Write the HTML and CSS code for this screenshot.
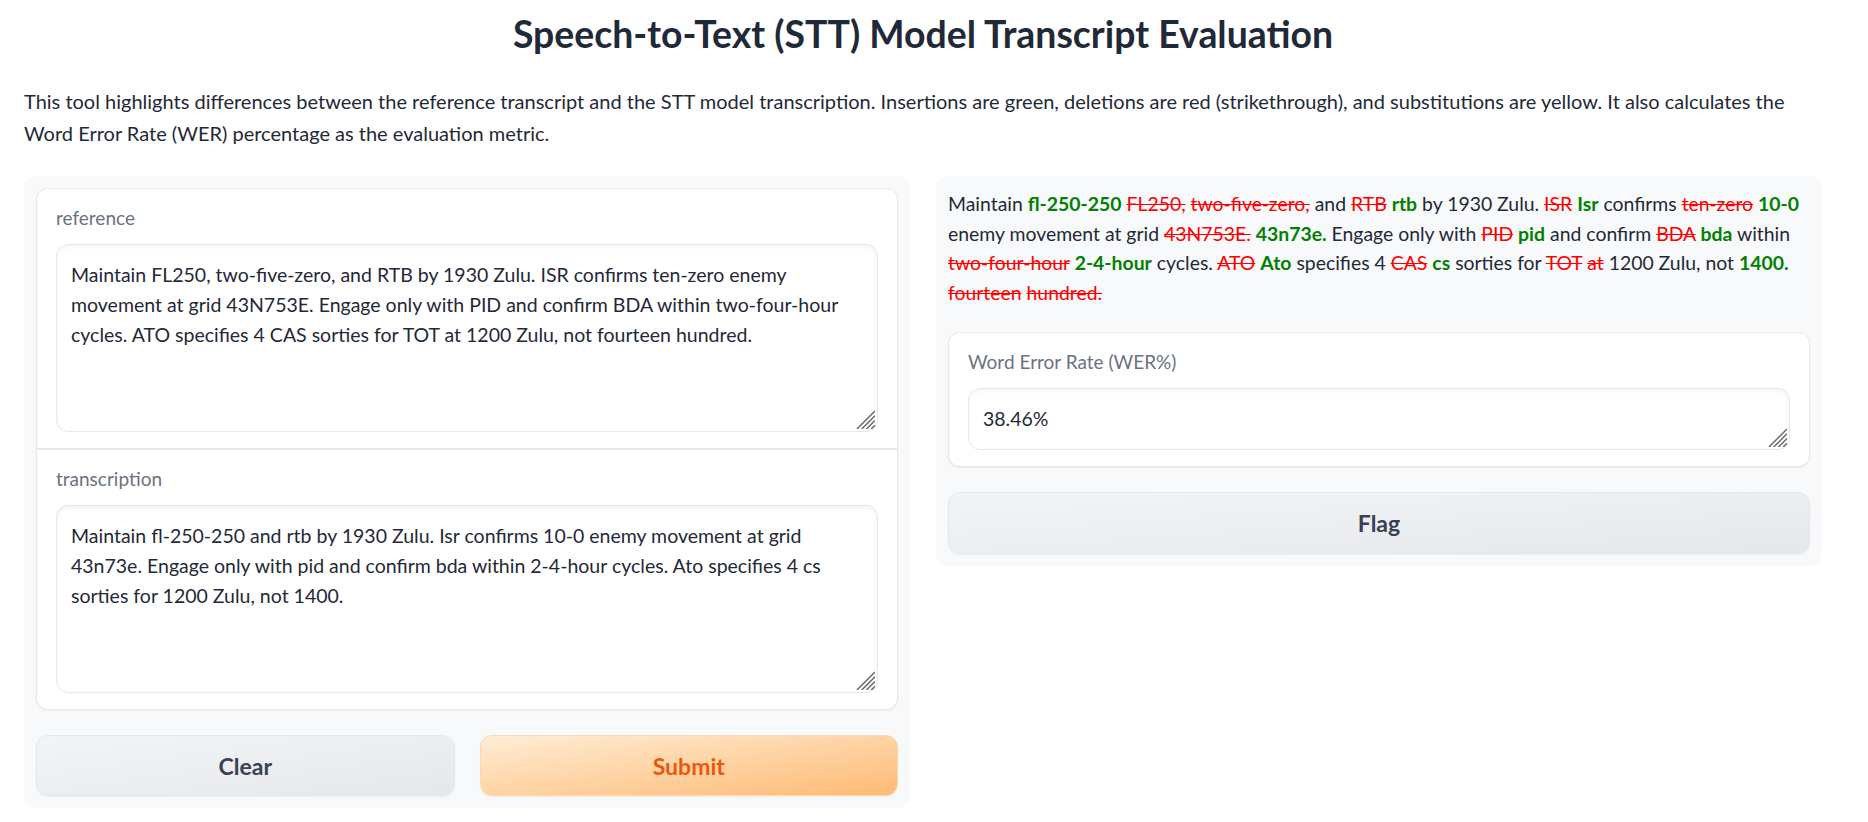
FILE: index.html
```html
<!DOCTYPE html>
<html lang="en">
<head>
<meta charset="utf-8">
<title>Speech-to-Text (STT) Model Transcript Evaluation</title>
<link rel="stylesheet" href="styles.css">
</head>
<body>
<div class="app">
  <h1 class="title">Speech-to-Text (STT) Model Transcript Evaluation</h1>
  <p class="desc">This tool highlights differences between the reference transcript and the STT model transcription. Insertions are green, deletions are red (strikethrough), and substitutions are yellow. It also calculates the Word Error Rate (WER) percentage as the evaluation metric.</p>
  <div class="row">
    <div class="panel">
      <div class="form">
        <label class="block">
          <span class="label">reference</span>
          <span class="field">
            <textarea class="input tall">Maintain FL250, two-five-zero, and RTB by 1930 Zulu. ISR confirms ten-zero enemy movement at grid 43N753E. Engage only with PID and confirm BDA within two-four-hour cycles. ATO specifies 4 CAS sorties for TOT at 1200 Zulu, not fourteen hundred.</textarea>
            <svg class="grip" viewBox="0 0 20 20" width="20" height="20" aria-hidden="true"><path d="M1 20 L20 1 M6 20 L20 6 M11 20 L20 11 M16 20 L20 16"/></svg>
          </span>
        </label>
        <label class="block">
          <span class="label">transcription</span>
          <span class="field">
            <textarea class="input tall">Maintain fl-250-250 and rtb by 1930 Zulu. Isr confirms 10-0 enemy movement at grid 43n73e. Engage only with pid and confirm bda within 2-4-hour cycles. Ato specifies 4 cs sorties for 1200 Zulu, not 1400.</textarea>
            <svg class="grip" viewBox="0 0 20 20" width="20" height="20" aria-hidden="true"><path d="M1 20 L20 1 M6 20 L20 6 M11 20 L20 11 M16 20 L20 16"/></svg>
          </span>
        </label>
      </div>
      <div class="btn-row">
        <button class="btn secondary">Clear</button>
        <button class="btn primary">Submit</button>
      </div>
    </div>
    <div class="panel">
      <div class="diff">Maintain <span class="ins">fl-250-250</span> <span class="del">FL250,</span> <span class="del">two-five-zero,</span> and <span class="del">RTB</span> <span class="ins">rtb</span> by 1930 Zulu. <span class="del">ISR</span> <span class="ins">Isr</span> confirms <span class="del">ten-zero</span> <span class="ins">10-0</span> enemy movement at grid <span class="del">43N753E.</span> <span class="ins">43n73e.</span> Engage only with <span class="del">PID</span> <span class="ins">pid</span> and confirm <span class="del">BDA</span> <span class="ins">bda</span> within <span class="del">two-four-hour</span> <span class="ins">2-4-hour</span> cycles. <span class="del">ATO</span> <span class="ins">Ato</span> specifies 4 <span class="del">CAS</span> <span class="ins">cs</span> sorties for <span class="del">TOT</span> <span class="del">at</span> 1200 Zulu, not <span class="ins">1400.</span> <span class="del">fourteen</span> <span class="del">hundred.</span></div>
      <div class="form">
        <label class="block">
          <span class="label">Word Error Rate (WER%)</span>
          <span class="field">
            <textarea class="input short">38.46%</textarea>
            <svg class="grip" viewBox="0 0 20 20" width="20" height="20" aria-hidden="true"><path d="M1 20 L20 1 M6 20 L20 6 M11 20 L20 11 M16 20 L20 16"/></svg>
          </span>
        </label>
      </div>
      <button class="btn secondary wide">Flag</button>
    </div>
  </div>
</div>
</body>
</html>
```

FILE: styles.css
```css
* { box-sizing: border-box; }

html, body {
  margin: 0;
  padding: 0;
  background: #ffffff;
}

body {
  font-family: "Lato", "Liberation Sans", sans-serif;
  color: #1f2937;
}

.app {
  width: 1798px;
  margin-left: 24px;
}

.title {
  margin: 11px 0 0;
  text-align: center;
  font-size: 37.4px;
  line-height: 46px;
  font-weight: 700;
  color: #1f2937;
}

.desc {
  margin: 28px 0 0;
  font-size: 20px;
  line-height: 32px;
  color: #1f2937;
}

.row {
  display: flex;
  gap: 26px;
  margin-top: 27px;
  align-items: flex-start;
}

.panel {
  flex: 1 1 0;
  background: #f8f9fb;
  border-radius: 12px;
  padding: 12px;
  display: flex;
  flex-direction: column;
  gap: 25px;
}

.form {
  display: flex;
  flex-direction: column;
  gap: 2px;
  background: #e5e7eb;
  border: 1px solid #e5e7eb;
  border-radius: 12px;
  overflow: hidden;
  box-shadow: 0 1px 2px rgba(0, 0, 0, 0.05);
}

.block {
  display: flex;
  flex-direction: column;
  background: #ffffff;
  padding: 16px 19px;
}

.label {
  font-size: 19px;
  line-height: 26px;
  color: #6b7280;
  margin-bottom: 13px;
}

.field {
  position: relative;
  display: block;
}

.input {
  display: block;
  width: 100%;
  font-family: "Lato", "Liberation Sans", sans-serif;
  font-size: 19.5px;
  line-height: 30px;
  color: #1f2937;
  background: #ffffff;
  border: 1px solid #e5e7eb;
  border-radius: 12px;
  padding: 15px 14px;
  box-shadow: inset 0 2px 4px rgba(0, 0, 0, 0.05);
  resize: none;
  outline: none;
}

.input.tall { height: 188px; }
.input.short { height: 62px; }

.grip {
  position: absolute;
  right: 3px;
  bottom: 3px;
  width: 19px;
  height: 19px;
  pointer-events: none;
}

.grip path {
  stroke: #6b6b6b;
  stroke-width: 1.6;
  fill: none;
}

.btn-row {
  display: flex;
  gap: 25px;
}

.btn {
  flex: 1 1 0;
  height: 61px;
  border-radius: 12px;
  font-family: "Lato", "Liberation Sans", sans-serif;
  font-size: 23px;
  font-weight: 700;
  cursor: pointer;
  box-shadow: 0 1px 2px rgba(0, 0, 0, 0.05);
}

.btn.secondary {
  background: linear-gradient(to bottom right, #f3f4f6, #e5e7eb);
  border: 1px solid #e5e7eb;
  color: #374151;
}

.btn.primary {
  background: linear-gradient(to bottom right, #ffedd5, #fdba74);
  border: 1px solid #fed7aa;
  color: #ea580c;
}

.btn.wide {
  flex: none;
  width: 100%;
  height: 62px;
}

.diff {
  font-size: 19.4px;
  line-height: 29.5px;
  color: #1f2937;
  padding-top: 1px;
}

.ins {
  color: #008000;
  font-weight: 700;
}

.del {
  color: #ff0000;
  text-decoration: line-through;
}
```
